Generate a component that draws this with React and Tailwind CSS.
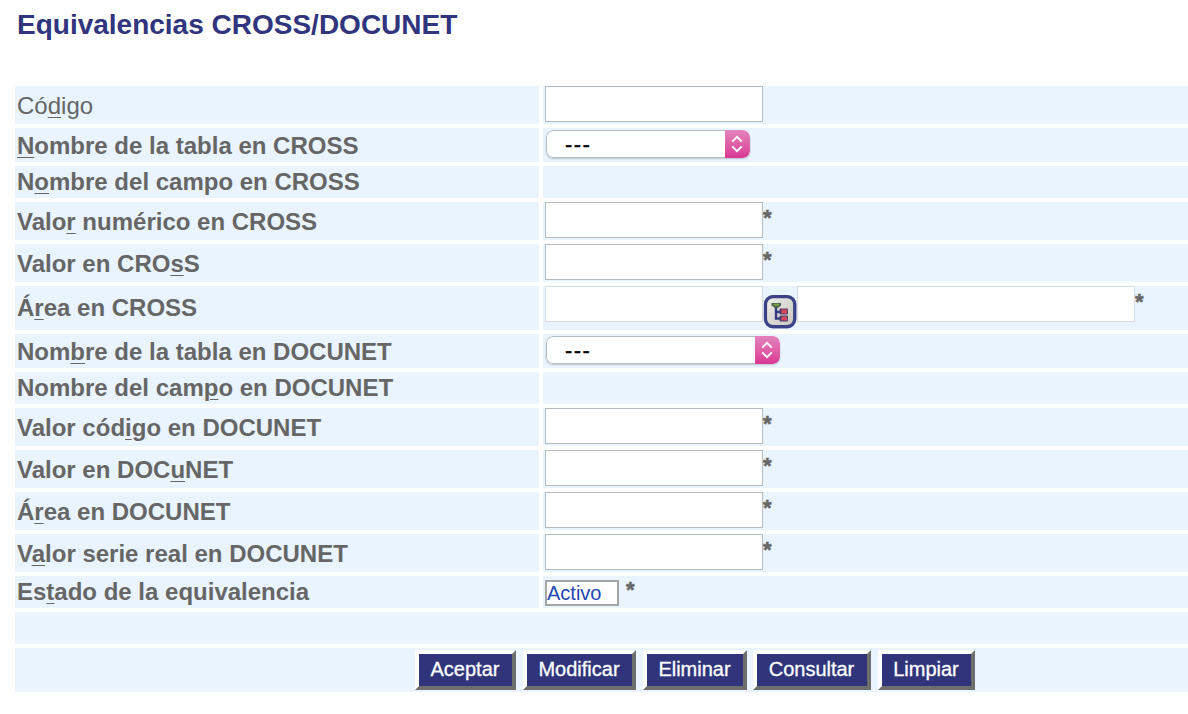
const rows = [
  { label: ["Có", "d", "igo"], kind: "input", height: "h-[38px]", inset: "pt-[2px]", light: true },
  { label: ["", "N", "ombre de la tabla en CROSS"], kind: "select", height: "h-[34px]", inset: "pt-[2px]", width: "w-[204px]" },
  { label: ["N", "o", "mbre del campo en CROSS"], kind: "empty", height: "h-[32px]", inset: "pt-0" },
  { label: ["Valo", "r", " numérico en CROSS"], kind: "input", height: "h-[38px]", inset: "pt-[2px]", required: true },
  { label: ["Valor en CRO", "s", "S"], kind: "input", height: "h-[38px]", inset: "pt-[2px]", required: true },
  { label: ["Á", "r", "ea en CROSS"], kind: "lookup", height: "h-[44px]", inset: "pt-0", required: true },
  { label: ["Nom", "b", "re de la tabla en DOCUNET"], kind: "select", height: "h-[34px]", inset: "pt-[2px]", width: "w-[234px]" },
  { label: ["Nombre del cam", "p", "o en DOCUNET"], kind: "empty", height: "h-[32px]", inset: "pt-0" },
  { label: ["Valor cód", "i", "go en DOCUNET"], kind: "input", height: "h-[38px]", inset: "pt-[2px]", required: true },
  { label: ["Valor en DOC", "u", "NET"], kind: "input", height: "h-[38px]", inset: "pt-[2px]", required: true },
  { label: ["Á", "r", "ea en DOCUNET"], kind: "input", height: "h-[38px]", inset: "pt-[2px]", required: true },
  { label: ["V", "a", "lor serie real en DOCUNET"], kind: "input", height: "h-[38px]", inset: "pt-[2px]", required: true },
  { label: ["Es", "t", "ado de la equivalencia"], kind: "status", height: "h-[32px]", inset: "pt-0", required: true },
];

const buttons = [
  { text: "Aceptar", size: "w-[101px]" },
  { text: "Modificar", size: "ml-[7px] w-[113px]" },
  { text: "Eliminar", size: "ml-[7px] w-[104px]" },
  { text: "Consultar", size: "ml-[6px] w-[118px]" },
  { text: "Limpiar", size: "ml-[7px] w-[97px]" },
];

function Select({ width }) {
  return (
    <div className={`ml-[3px] mt-[2px] flex h-7 overflow-hidden rounded-[7px] bg-white shadow-[0_1px_2px_rgba(0,0,0,0.2)] ${width}`}>
      <div className="flex-1 rounded-l-[7px] border border-r-0 border-[#b4bcc3] pl-[18px] text-[22px] leading-[28px] tracking-[1.4px] text-black [-webkit-text-stroke:0.3px_black]">
        ---
      </div>
      <div className="flex w-[25px] items-center justify-center rounded-r-[7px] bg-linear-to-b from-[#e283bd] to-[#d93593] pr-px">
        <svg width="12" height="18" viewBox="0 0 12 18" fill="none" stroke="white" strokeWidth="2">
          <path d="M1.200 6.600 6 1.900l4.800 4.700M1.200 11.400 6 16.100l4.800-4.700" />
        </svg>
      </div>
    </div>
  );
}

function TreeIcon() {
  return (
    <svg className="mt-[8px] shrink-0" width="34" height="36" viewBox="0 0 34 36">
      <defs>
        <linearGradient id="face" x1="0" y1="0" x2="1" y2="1">
          <stop offset="0" stopColor="#efeeea" />
          <stop offset="1" stopColor="#c6c3bc" />
        </linearGradient>
        <filter id="soft" x="0" y="0" width="1" height="1">
          <feGaussianBlur stdDeviation="0.600" />
        </filter>
      </defs>
      <rect x="0.800" y="1" width="32.600" height="33.400" rx="9" fill="#a0a5cd" />
      <rect x="2.500" y="2.600" width="29.200" height="30" rx="7.500" fill="url(#face)" stroke="#3c4287" strokeWidth="3.200" />
      <g filter="url(#soft)">
        <rect x="0" y="0" width="34" height="36" fill="none" />
        <path d="M13 11v13.500h6M13 18h6" fill="none" stroke="#343b80" strokeWidth="2.400" />
        <path d="M8.500 9h9.500v2.500l-3 2.500h-3l-3.500-2.500z" fill="#4b6450" />
        <path d="M10.500 9.800h5.500v1.800h-5.500z" fill="#7fa33f" />
        <rect x="16.500" y="14.500" width="8.500" height="6" rx="1" fill="#4d3f70" />
        <rect x="18.500" y="15.500" width="5.500" height="4" fill="#d64458" />
        <rect x="16.500" y="21.500" width="8.500" height="6" rx="1" fill="#4d3f70" />
        <rect x="18.500" y="22.500" width="5.500" height="4" fill="#d64458" />
      </g>
    </svg>
  );
}

function Star({ className = "" }) {
  return (
    <span className={`text-[22px] font-bold leading-[26px] text-[#666] [-webkit-text-stroke:0.5px_#666] ${className}`}>*</span>
  );
}

function Field({ row }) {
  if (row.kind === "select") return <Select width={row.width} />;
  if (row.kind === "lookup")
    return (
      <>
        <input aria-label="Código de área" className="ml-[2px] h-9 w-[218px] border border-[#d8dce0] bg-white" />
        <TreeIcon />
        <input aria-label="Nombre de área" className="h-9 w-[338px] border border-[#d8dce0] bg-white" />
        <Star className="mt-[3px]" />
      </>
    );
  if (row.kind === "status")
    return (
      <>
        <div className="ml-[2px] mt-[4px] h-[26px] w-[74px] border-2 border-[#a6a6a6] bg-white text-[20px] leading-[23px] text-[#2446b0]">
          Activo
        </div>
        <Star className="ml-[7px] mt-[1px]" />
      </>
    );
  if (row.kind === "input")
    return (
      <>
        <input aria-label={row.label.join("")} className="ml-[2px] h-9 w-[218px] border border-[#b5bcc1] bg-white" />
        {row.required && <Star className="mt-[3px]" />}
      </>
    );
  return null;
}

export default function App() {
  return (
    <main className="h-[714px] w-[1188px] overflow-hidden bg-white font-['Liberation_Sans',Arial,sans-serif]">
      <h1 className="h-[86px] pl-[17px] pt-[9px] text-[28px] font-bold leading-[32px] text-[#30357d]">
        Equivalencias CROSS/DOCUNET
      </h1>
      <form className="ml-[15px] flex flex-col gap-1">
        {rows.map((row) => (
          <div key={row.label.join("")} className={`grid grid-cols-[524px_645px] gap-1 ${row.height}`}>
            <div
              className={`flex items-center bg-[#e9f4fe] pl-[2px] text-[24px] leading-[28px] text-[#666] ${row.inset} ${row.light ? "" : "font-bold"}`}
            >
              <span className="whitespace-pre">
                {row.label[0]}
                <u className="decoration-1 underline-offset-[3px]">{row.label[1]}</u>
                {row.label[2]}
              </span>
            </div>
            <div className="flex items-start bg-[#e9f4fe]">
              <Field row={row} />
            </div>
          </div>
        ))}
        <div className="h-8 bg-[#e9f4fe]" />
        <div className="flex h-11 items-start bg-[#e9f4fe] pl-[400px] pt-[2px]">
          {buttons.map((b) => (
            <button
              key={b.text}
              type="button"
              className={`h-10 border-4 border-b-[#6e6e6e] border-l-white border-r-[#6e6e6e] border-t-white bg-[#30357b] pb-[2px] pr-px text-[20px] leading-[30px] text-white [-webkit-text-stroke:0.3px_white] ${b.size}`}
            >
              {b.text}
            </button>
          ))}
        </div>
      </form>
    </main>
  );
}
